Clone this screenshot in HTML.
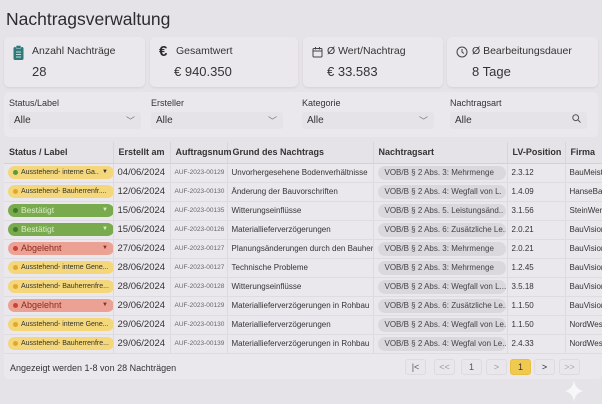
<!DOCTYPE html>
<html><head><meta charset="utf-8"><style>
*{box-sizing:border-box;margin:0;padding:0}
body{width:602px;height:404px;overflow:hidden;background:#e6e3e8;font-family:"Liberation Sans",sans-serif;color:#2a2a2e;position:relative}
.t{position:absolute;left:6px;top:9px;font-size:17.5px;color:#2b2b30}
.card{position:absolute;top:37px;height:50px;background:#ebe8ed;border-radius:5px;box-shadow:0 1px 2px rgba(0,0,0,.08)}
.card .l{position:absolute;left:27px;top:8px;font-size:10.5px;color:#333}
.card .v{position:absolute;left:27px;top:27px;font-size:13px;color:#333}
.card .i{position:absolute;left:9px;top:8px}
.filt{position:absolute;left:4px;top:92px;width:594px;height:45px;background:#ebe8ed;border-radius:5px}
.f{position:absolute;top:6px;font-size:9px;color:#333}
.f .b{margin-top:4px;height:17px;width:132px;background:#e6e3e8;border-radius:3px;font-size:10px;padding:3px 5px;position:relative}
.f .b span{position:absolute;right:6px;top:2px;color:#777;font-size:9px}
.tbl{position:absolute;left:4px;top:142px;width:598px;height:237px;background:#ebe8ed;border-radius:5px;overflow:hidden}
table{border-collapse:collapse;font-size:8px;width:640px;table-layout:fixed}
th{height:21px;text-align:left;font-size:9px;font-weight:bold;padding-left:5px;background:#e6e3e8;border-right:1px solid #d8d5db;border-bottom:1px solid #d3d0d6;color:#333}
td{height:19px;padding-left:4px;border-right:1px solid #dcd9df;border-bottom:1px solid #dedbe1;white-space:nowrap;overflow:hidden;color:#333}
td.d{font-size:9.5px}
td.a{font-size:6.5px;color:#666}
.p{display:flex;align-items:center;height:13px;width:106px;border-radius:7px;font-size:7px;line-height:13px;padding:0 0 0 13px;position:relative;white-space:nowrap;overflow:hidden}
.p:before{content:"";position:absolute;left:5px;top:4px;width:5px;height:5px;border-radius:50%;background:var(--d)}
.p i{position:absolute;right:6px;top:0;line-height:13px;font-style:normal;font-size:6px}
.y{background:#f4d77a;--d:#5a9a3a}
.y2{background:#f4d77a;--d:#e3a82a}
.g{background:#79ab4e;color:#d9ecc9;--d:#3e7a28;font-size:8.5px!important}
.r{background:#eba295;color:#8b2a1e;--d:#c94436;font-size:9px!important}
.n{display:block;height:14px;width:128px;background:#dad7dd;border-radius:7px;font-size:8px;line-height:14px;padding:0 0 0 7px;overflow:hidden;color:#444}
.pg{position:absolute;top:359px;height:16px;width:21px;border-radius:3px;background:#e9e6ec;border:1px solid #dddae0;font-size:9px;text-align:center;line-height:14px;color:#555}
</style></head><body>
<div class="t">Nachtragsverwaltung</div>
<div class="card" style="left:4px;width:141px"><svg class="i" width="11" height="15" viewBox="0 0 11 15"><rect x="0.5" y="2" width="10" height="13" rx="1.5" fill="#2f7a78"/><rect x="3" y="0.5" width="5" height="3" rx="1" fill="#2f7a78" stroke="#cde" stroke-width=".5"/><path d="M3 7h5M3 9.5h5M3 12h5" stroke="#bfe0dc" stroke-width="1"/></svg><div class="l" style="left:28px">Anzahl Nachträge</div><div class="v" style="left:28px">28</div></div>
<div class="card" style="left:150px;width:148px"><div class="i" style="font-size:15px;font-weight:bold;top:6px">€</div><div class="l" style="left:26px">Gesamtwert</div><div class="v" style="left:24px">€ 940.350</div></div>
<div class="card" style="left:303px;width:140px"><svg class="i" width="11" height="11" viewBox="0 0 11 11" style="top:10px"><rect x="1" y="1.5" width="9" height="8.5" rx="1" fill="none" stroke="#444" stroke-width="1"/><path d="M1 4h9M3.5 0v2.5M7.5 0v2.5" stroke="#444"/></svg><div class="l" style="left:24px">Ø Wert/Nachtrag</div><div class="v" style="left:24px">€ 33.583</div></div>
<div class="card" style="left:447px;width:151px"><svg class="i" width="12" height="12" viewBox="0 0 12 12" style="top:9px"><circle cx="6" cy="6" r="5" fill="none" stroke="#444"/><path d="M6 3v3l2 1.5" stroke="#444" fill="none"/></svg><div class="l" style="left:25px">Ø Bearbeitungsdauer</div><div class="v" style="left:25px">8 Tage</div></div>
<div class="filt">
<div class="f" style="left:5px">Status/Label<div class="b">Alle<span>﹀</span></div></div>
<div class="f" style="left:147px">Ersteller<div class="b">Alle<span>﹀</span></div></div>
<div class="f" style="left:298px">Kategorie<div class="b">Alle<span>﹀</span></div></div>
<div class="f" style="left:446px">Nachtragsart<div class="b" style="width:137px">Alle<span><svg width="9" height="9" viewBox="0 0 9 9"><circle cx="3.7" cy="3.7" r="2.9" fill="none" stroke="#555"/><path d="M6 6l2.5 2.5" stroke="#555"/></svg></span></div></div>
</div>
<div class="tbl"><table>
<colgroup><col style="width:109px"><col style="width:57px"><col style="width:57px"><col style="width:146px"><col style="width:134px"><col style="width:58px"><col style="width:79px"></colgroup>
<tr><th>Status / Label</th><th>Erstellt am</th><th>Auftragsnum</th><th>Grund des Nachtrags</th><th>Nachtragsart</th><th>LV-Position</th><th>Firma</th></tr>
<tr><td><span class="p y">Ausstehend- interne Ga..<i>▼</i></span></td><td class="d">04/06/2024</td><td class="a">AUF-2023-00129</td><td>Unvorhergesehene Bodenverhältnisse</td><td><span class="n">VOB/B § 2 Abs. 3: Mehrmenge</span></td><td>2.3.12</td><td>BauMeister</td></tr>
<tr><td><span class="p y2">Ausstehend- Bauherrenfr....</span></td><td class="d">12/06/2024</td><td class="a">AUF-2023-00130</td><td>Änderung der Bauvorschriften</td><td><span class="n">VOB/B § 2 Abs. 4: Wegfall von L.</span></td><td>1.4.09</td><td>HanseBau</td></tr>
<tr><td><span class="p g">Bestätigt<i>▼</i></span></td><td class="d">15/06/2024</td><td class="a">AUF-2023-00135</td><td>Witterungseinflüsse</td><td><span class="n">VOB/B § 2 Abs. 5. Leistungsänd..</span></td><td>3.1.56</td><td>SteinWerk</td></tr>
<tr><td><span class="p g">Bestätigt<i>▼</i></span></td><td class="d">15/06/2024</td><td class="a">AUF-2023-00126</td><td>Materiallieferverzögerungen</td><td><span class="n">VOB/B § 2 Abs. 6: Zusätzliche Le..</span></td><td>2.0.21</td><td>BauVision</td></tr>
<tr><td><span class="p r">Abgelehnt<i>▼</i></span></td><td class="d">27/06/2024</td><td class="a">AUF-2023-00127</td><td>Planungsänderungen durch den Bauherrn</td><td><span class="n">VOB/B § 2 Abs. 3: Mehrmenge</span></td><td>2.0.21</td><td>BauVision</td></tr>
<tr><td><span class="p y2">Ausstehend- interne Gene...</span></td><td class="d">28/06/2024</td><td class="a">AUF-2023-00127</td><td>Technische Probleme</td><td><span class="n">VOB/B § 2 Abs. 3: Mehrmenge</span></td><td>1.2.45</td><td>BauVision</td></tr>
<tr><td><span class="p y2">Ausstehend- Bauherrenfre...</span></td><td class="d">28/06/2024</td><td class="a">AUF-2023-00128</td><td>Witterungseinflüsse</td><td><span class="n">VOB/B § 2 Abs. 4: Wegfall von L...</span></td><td>3.5.18</td><td>BauVision</td></tr>
<tr><td><span class="p r">Abgelehnt<i>▼</i></span></td><td class="d">29/06/2024</td><td class="a">AUF-2023-00129</td><td>Materiallieferverzögerungen in Rohbau</td><td><span class="n">VOB/B § 2 Abs. 6: Zusätzliche Le..</span></td><td>1.1.50</td><td>BauVision</td></tr>
<tr><td><span class="p y2">Ausstehend- interne Gene...</span></td><td class="d">29/06/2024</td><td class="a">AUF-2023-00130</td><td>Materiallieferverzögerungen</td><td><span class="n">VOB/B § 2 Abs. 4: Wegfall von Le..</span></td><td>1.1.50</td><td>NordWest</td></tr>
<tr><td><span class="p y2">Ausstehend- Bauherrenfre...</span></td><td class="d">29/06/2024</td><td class="a">AUF-2023-00139</td><td>Materiallieferverzögerungen in Rohbau</td><td><span class="n">VOB/B § 2 Abs. 4: Wegfal von Le..</span></td><td>2.4.33</td><td>NordWest</td></tr>
</table>
<div style="position:absolute;left:6px;top:221px;font-size:9px;color:#333">Angezeigt werden 1-8 von 28 Nachträgen</div>
</div>
<div class="pg" style="left:405px">|&lt;</div>
<div class="pg" style="left:434px;color:#999">&lt;&lt;</div>
<div class="pg" style="left:461px">1</div>
<div class="pg" style="left:486px;color:#999">&gt;</div>
<div class="pg" style="left:510px;background:#f1c94e;border-color:#e8bf40;color:#333">1</div>
<div class="pg" style="left:534px;color:#222">&gt;</div>
<div class="pg" style="left:559px;color:#aaa">&gt;&gt;</div>
<svg style="position:absolute;left:565px;top:380px" width="18" height="22" viewBox="0 0 18 22"><path d="M9 0Q10 9 18 11Q10 13 9 22Q8 13 0 11Q8 9 9 0Z" fill="#f7f6f8"/></svg>
</body></html>
